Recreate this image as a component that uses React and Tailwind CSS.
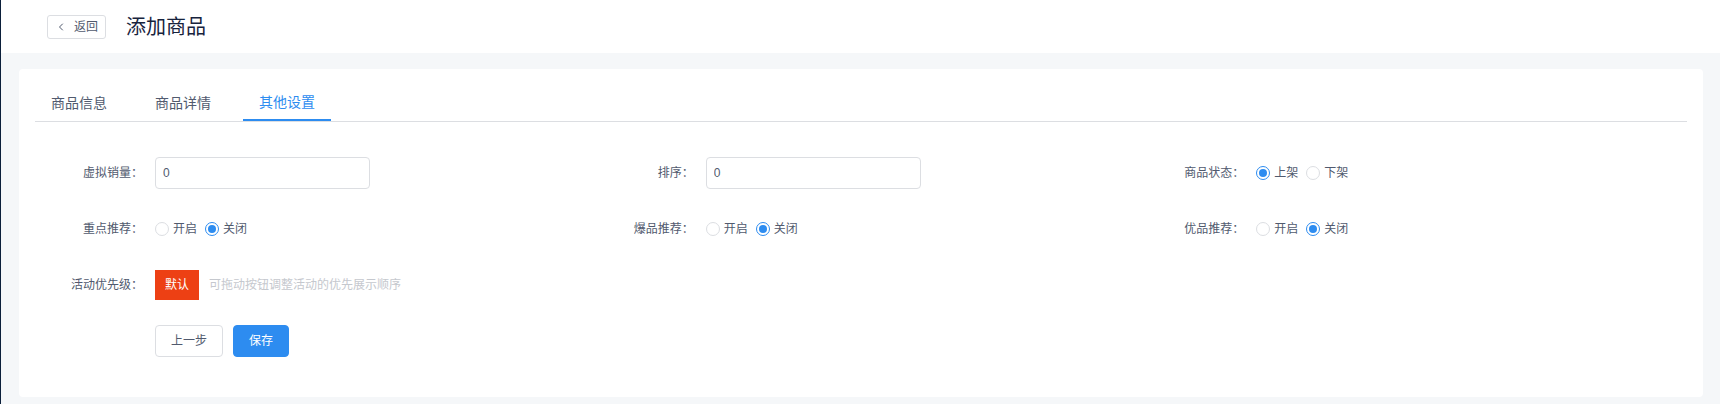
import React from 'react';
import { ChevronLeft } from 'lucide-react';

const Radio = ({ label, checked }) => (
    <label className="flex items-center mr-2 cursor-pointer">
        <span
            className={`w-[14px] h-[14px] rounded-full border flex items-center justify-center mr-1 bg-white ${
                checked ? 'border-[#2d8cf0]' : 'border-[#dcdee2]'
            }`}
        >
            {checked && <span className="w-2 h-2 rounded-full bg-[#2d8cf0]" />}
        </span>
        <span className="text-[12px] text-[#515a6e]">{label}</span>
    </label>
);

const FormItem = ({ label, children, className = '' }) => (
    <div className={`flex items-center h-8 mb-6 ${className}`}>
        <div className="w-[120px] pr-3 text-right text-[12px] text-[#515a6e] flex-shrink-0">{label}</div>
        <div className="flex items-center">{children}</div>
    </div>
);

const Input = ({ value }) => (
    <input
        defaultValue={value}
        className="w-[215px] h-8 px-[7px] border border-[#dcdee2] rounded-[4px] text-[12px] text-[#515a6e] outline-none bg-white"
    />
);

const tabs = ['商品信息', '商品详情', '其他设置'];

export default function App() {
    const active = 2;

    return (
        <div className="min-h-[404px] bg-[#f5f7f9] border-l border-[#0b1f3a] font-['Liberation_Sans','Noto_Sans_CJK_SC',sans-serif]">
            {/* header */}
            <div className="h-[53px] bg-white flex items-center pl-[46px]">
                <button className="h-6 flex items-center gap-[7px] px-[7px] border border-[#dcdee2] rounded-[3px] text-[12px] text-[#515a6e] bg-white">
                    <ChevronLeft size={12} strokeWidth={2} />
                    <span>返回</span>
                </button>
                <h1 className="ml-5 text-[20px] text-[#17233d] leading-none">添加商品</h1>
            </div>

            <div className="pt-4 pb-2 pl-[18px] pr-[17px]">
                <div className="bg-white rounded-[4px] p-4">
                    {/* tabs */}
                    <div className="flex border-b border-[#dcdee2]">
                        {tabs.map((t, i) => (
                            <div
                                key={t}
                                className={`h-9 px-4 mr-4 flex items-center text-[14px] cursor-pointer ${
                                    i === active
                                        ? 'text-[#2d8cf0] border-b-2 border-[#2d8cf0] -mb-px'
                                        : 'text-[#515a6e]'
                                }`}
                            >
                                {t}
                            </div>
                        ))}
                    </div>

                    {/* form */}
                    <div className="mt-[35px]">
                        <div className="grid grid-cols-3">
                            <FormItem label="虚拟销量：">
                                <Input value="0" />
                            </FormItem>
                            <FormItem label="排序：">
                                <Input value="0" />
                            </FormItem>
                            <FormItem label="商品状态：">
                                <Radio label="上架" checked />
                                <Radio label="下架" />
                            </FormItem>

                            <FormItem label="重点推荐：">
                                <Radio label="开启" />
                                <Radio label="关闭" checked />
                            </FormItem>
                            <FormItem label="爆品推荐：">
                                <Radio label="开启" />
                                <Radio label="关闭" checked />
                            </FormItem>
                            <FormItem label="优品推荐：">
                                <Radio label="开启" />
                                <Radio label="关闭" checked />
                            </FormItem>
                        </div>

                        <FormItem label="活动优先级：">
                            <div className="w-[44px] h-[30px] bg-[#ed4014] text-white text-[12px] flex items-center justify-center">
                                默认
                            </div>
                            <span className="ml-[10px] text-[12px] text-[#c5c8ce]">可拖动按钮调整活动的优先展示顺序</span>
                        </FormItem>

                        <div className="flex items-center h-8 mb-6 pl-[120px] gap-[10px]">
                            <button className="h-8 px-[15px] border border-[#dcdee2] rounded-[4px] text-[12px] text-[#515a6e] bg-white">
                                上一步
                            </button>
                            <button className="h-8 px-[15px] border border-[#2d8cf0] rounded-[4px] text-[12px] text-white bg-[#2d8cf0]">
                                保存
                            </button>
                        </div>
                    </div>
                </div>
            </div>
        </div>
    );
}
